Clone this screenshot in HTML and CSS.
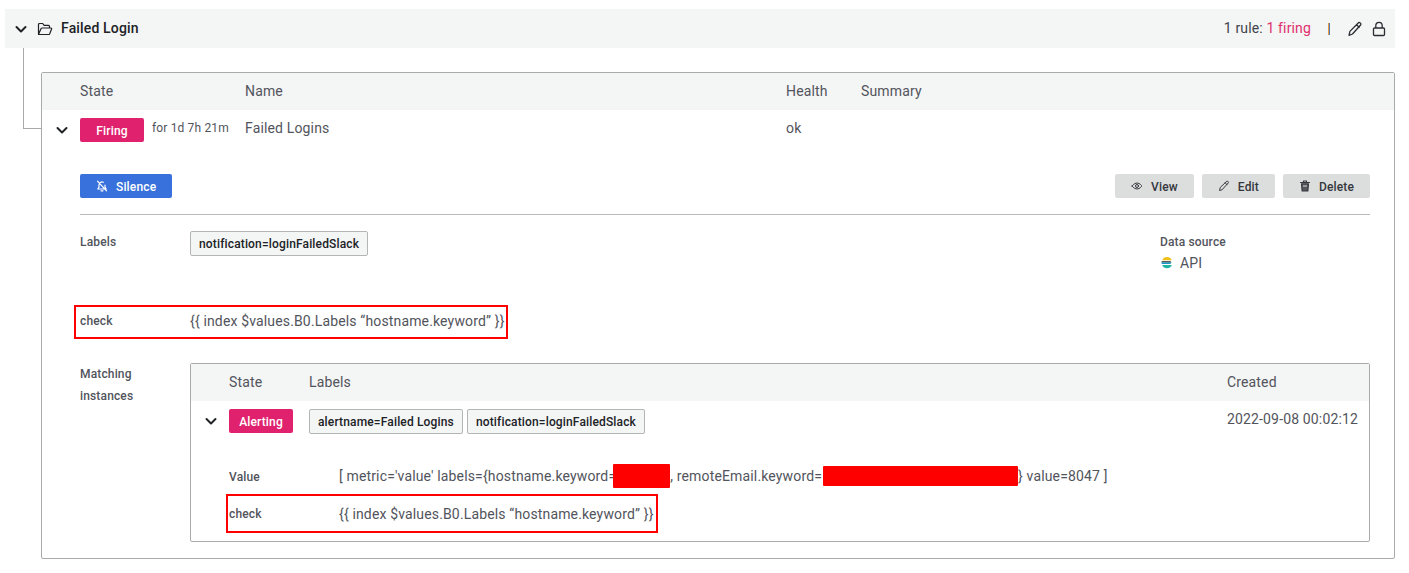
FILE: index.html
```html
<!DOCTYPE html>
<html lang="en">
<head>
<meta charset="utf-8">
<title>Failed Login</title>
<link rel="stylesheet" href="styles.css">
</head>
<body>
<section class="group">
  <header class="group-head">
    <svg class="chev" viewBox="0 0 16 16"><path d="M3.500 6l4.500 4.500L12.500 6" /></svg>
    <svg class="folder" viewBox="0 0 16 16"><path d="M1.500 13V3.500a1 1 0 0 1 1-1h3.200l1.400 1.800h4.400a1 1 0 0 1 1 1V7M1.500 13.500h10.200a1 1 0 0 0 .9-.6l2-4.900a.7.7 0 0 0-.7-1H5a1 1 0 0 0-.9.6L1.700 13" /></svg>
    <h1 class="group-title">Failed Login</h1>
    <div class="group-stats">1 rule: <span class="firing-text">1 firing</span></div>
    <span class="sep"></span>
    <svg class="act-icon pencil" viewBox="0 0 16 16"><path d="M11 2.200a1.600 1.600 0 0 1 2.800 1.500L5.500 13 2 14.300l.9-3.900zM9.600 3.800l2.600 2.600" /></svg>
    <svg class="act-icon lock" viewBox="0 0 16 16"><path d="M4.800 7V4.500a3.200 3.200 0 0 1 6.400 0V7M3.500 7h9a1 1 0 0 1 1 1v5.500a1 1 0 0 1-1 1h-9a1 1 0 0 1-1-1V8a1 1 0 0 1 1-1z" /></svg>
  </header>

  <div class="tree"></div>

  <div class="panel">
    <div class="thead">
      <span class="col-state">State</span>
      <span class="col-name">Name</span>
      <span class="col-health">Health</span>
      <span>Summary</span>
    </div>
    <div class="rule-row">
      <svg class="chev rule-chev" viewBox="0 0 16 16"><path d="M3.500 6l4.500 4.500L12.500 6" /></svg>
      <div class="col-state state-cell">
        <span class="badge">Firing</span>
        <span class="for">for 1d 7h 21m</span>
      </div>
      <span class="col-name cell-text">Failed Logins</span>
      <span class="col-health cell-text">ok</span>
    </div>

    <div class="details">
      <div class="actions">
        <button class="btn btn-blue">
          <svg class="btn-icon bell" viewBox="0 0 12 12"><path d="M3 7.200V5a3 3 0 0 1 4.300-2.700M9 5.200v2l1.200 1.800H1.800L3 7.200M5 10.800h2M1.500 1.200l9 9.600" /></svg>
          Silence
        </button>
        <div class="spacer"></div>
        <button class="btn btn-gray">
          <svg class="btn-icon" viewBox="0 0 16 16"><path d="M1.500 8s2.500-4 6.500-4 6.500 4 6.500 4-2.500 4-6.500 4-6.500-4-6.500-4z" /><circle cx="8" cy="8" r="2" /></svg>
          View
        </button>
        <button class="btn btn-gray">
          <svg class="btn-icon" viewBox="0 0 16 16"><path d="M11 2.200a1.600 1.600 0 0 1 2.800 1.500L5.500 13 2 14l.9-3.600zM9.600 3.800l2.600 2.600" /></svg>
          Edit
        </button>
        <button class="btn btn-gray">
          <svg class="btn-icon trash" viewBox="0 0 12 12"><path class="trash-body" d="M2.500 3.800h7l-.6 7.200H3.100z" /><path d="M1.500 2.500h9M4.500 2.500V1h3v1.500" /><path class="trash-line" d="M4.500 6h3" /></svg>
          Delete
        </button>
      </div>

      <div class="labels-row">
        <span class="key">Labels</span>
        <span class="tag">notification=loginFailedSlack</span>
        <div class="source">
          <span class="key">Data source</span>
          <span class="source-name">
            <svg class="es" viewBox="0 0 12 12">
              <path class="es-yellow" d="M1.200 3.200A5.200 5.200 0 0 1 10.800 3.200z" />
              <path class="es-dark" d="M.7 4.200h8.300a1.300 1.300 0 0 1 1.300 1.200H.5z" />
              <path class="es-blue" d="M.5 5.600h9.800a1.300 1.300 0 0 1-1.300 1.300H.7z" />
              <path class="es-teal" d="M1.200 8h9.600A5.200 5.200 0 0 1 1.200 8z" />
            </svg>
            API
          </span>
        </div>
      </div>

      <div class="check-row">
        <span class="key">check</span>
        <span class="plain">{{ index $values.B0.Labels “hostname.keyword” }}</span>
        <span class="mark mark-outer"></span>
      </div>

      <div class="matching">
        <span class="key key-tall">Matching<br>instances</span>
        <div class="instances">
          <div class="thead thead-inner">
            <span class="icol-state">State</span>
            <span class="icol-labels">Labels</span>
            <span class="icol-created">Created</span>
          </div>
          <div class="inst-row">
            <svg class="chev inst-chev" viewBox="0 0 16 16"><path d="M3.500 6l4.500 4.500L12.500 6" /></svg>
            <span class="icol-state"><span class="badge">Alerting</span></span>
            <div class="icol-labels inst-tags">
              <span class="tag">alertname=Failed Logins</span>
              <span class="tag">notification=loginFailedSlack</span>
            </div>
            <span class="icol-created cell-text date">2022-09-08 00:02:12</span>
          </div>
          <div class="inst-detail">
            <div class="detail-line value-line">
              <span class="key detail-key">Value</span>
              <span class="plain">[ metric='value' labels={hostname.keyword=<span class="redact redact-host"></span>, remoteEmail.keyword=<span class="redact redact-mail"></span>} value=8047 ]</span>
            </div>
            <div class="detail-line check-line">
              <span class="key detail-key">check</span>
              <span class="plain">{{ index $values.B0.Labels “hostname.keyword” }}</span>
              <span class="mark mark-inner"></span>
            </div>
          </div>
        </div>
      </div>
    </div>
  </div>
</section>
</body>
</html>
```
FILE: styles.css
```css
* { box-sizing: border-box; }
html, body { margin: 0; padding: 0; background: #fff; }
body {
  padding: 9px 14px 0 5px;
  font-family: Roboto, "Liberation Sans", sans-serif;
  font-size: 14px;
  letter-spacing: 0.15px;
  color: #52545c;
}
svg { fill: none; stroke: currentColor; stroke-linecap: round; stroke-linejoin: round; flex: none; }

.group { position: relative; }
.group-head {
  display: flex;
  align-items: center;
  height: 39px;
  background: #f4f5f5;
  padding: 0 8px 0 8px;
  color: #202226;
}
.chev { width: 16px; height: 16px; stroke-width: 2; color: #202226; }
.folder { width: 16px; height: 16px; margin-left: 8px; stroke-width: 1.200; }
.group-title { font-size: 14px; font-weight: 500; margin: 0 0 2px 8px; line-height: 20px; color: #202226; flex: 1; }
.group-stats { font-size: 14px; color: #41444b; margin-bottom: 2px; }
.firing-text { color: #e02f6b; }
.sep {
  width: 2px;
  height: 12px;
  background: linear-gradient(90deg, #eb9a3c 50%, #4f7ab8 50%);
  margin: 0 17px;
}
.act-icon { width: 16px; height: 16px; stroke-width: 1.300; color: #2b2d33; }
.pencil { margin-right: 8px; }

.tree {
  position: absolute;
  left: 18px;
  top: 39px;
  width: 19px;
  height: 81px;
  border-left: 1px solid #a9a9a9;
  border-bottom: 1px solid #a9a9a9;
}

.panel {
  margin: 24px 0 0 36px;
  height: 487px;
  border: 1px solid #a9abab;
  border-radius: 2px;
}
.thead {
  display: flex;
  align-items: center;
  height: 37px;
  background: #f4f5f5;
  padding: 0 0 2px 38px;
  line-height: 20px;
  color: #52545c;
}
.col-state { width: 165px; }
.col-name { width: 541px; }
.col-health { width: 75px; }

.rule-row { display: flex; align-items: flex-start; height: 64px; padding-top: 8px; position: relative; padding-left: 38px; }
.rule-chev { position: absolute; left: 12px; top: 12px; }
.state-cell { display: flex; align-items: flex-start; }
.cell-text { line-height: 20px; }
.badge {
  display: inline-block;
  width: 64px;
  height: 24px;
  line-height: 26px;
  text-align: center;
  background: #e0226e;
  color: #fff;
  font-size: 12px;
  font-weight: 500;
  border-radius: 2px;
}
.for { font-size: 12px; margin-left: 8px; line-height: 20px; }

.details { padding: 0 24px 0 38px; }
.actions { display: flex; gap: 8px; height: 41px; border-bottom: 1px solid #b9bbbb; }
.spacer { flex: 1; }
.btn {
  display: inline-flex;
  align-items: center;
  gap: 8px;
  height: 24px;
  padding: 2px 16px 0;
  border: 0;
  border-radius: 2px;
  font: 500 12px Roboto, "Liberation Sans", sans-serif;
  letter-spacing: 0.15px;
}
.btn-blue { background: #3871dc; color: #fff; width: 92px; }
.btn-gray { background: #dcdede; color: #35373d; }
.btn-icon { width: 12px; height: 12px; stroke-width: 1.300; margin-top: -2px; }
.bell { stroke-width: 1.200; }
.trash { stroke-width: 1.100; }
.trash-body { fill: #55575d; }
.trash-line { stroke: #dcdede; }

.labels-row { display: flex; align-items: flex-start; height: 90px; padding-top: 16px; position: relative; }
.key { font-size: 12px; font-weight: 500; color: #52545c; line-height: 22px; width: 110px; flex: none; }
.tag {
  display: inline-block;
  height: 25px;
  line-height: 25px;
  padding: 0 8px;
  background: #f4f5f5;
  border: 1px solid #b4b6b6;
  border-radius: 2px;
  font-size: 12px;
  font-weight: 500;
  color: #202226;
}
.source { margin-left: auto; width: 210px; display: flex; flex-direction: column; }
.source .key { width: auto; }
.source-name { display: flex; align-items: center; gap: 7px; line-height: 20px; margin-left: 1px; }
.es { width: 12px; height: 12px; stroke: none; }
.es-yellow { fill: #f0bf1a; }
.es-dark { fill: #22262b; }
.es-blue { fill: #1b9ac9; }
.es-teal { fill: #1fb5a2; }

.check-row { display: flex; align-items: center; height: 34px; padding-bottom: 2px; position: relative; }
.plain { line-height: 20px; }
.mark { position: absolute; border: 2px solid #f00; pointer-events: none; }
.mark-outer { left: -6px; top: 0; width: 434px; height: 34px; }

.matching { display: flex; margin-top: 24px; }
.key-tall { width: 110px; }
.instances {
  flex: 1;
  height: 179px;
  border: 1px solid #a9abab;
  border-radius: 2px;
}
.icol-state { width: 80px; flex: none; }
.icol-labels { flex: 1; }
.icol-created { width: 142px; flex: none; }
.inst-row { display: flex; align-items: flex-start; height: 56px; padding: 8px 0 0 38px; position: relative; }
.inst-chev { position: absolute; left: 12px; top: 12px; }
.inst-tags { display: flex; gap: 4px; }
.date { line-height: 20px; }

.inst-detail { padding-left: 38px; }
.detail-line { display: flex; align-items: center; position: relative; height: 38px; }
.detail-key { line-height: 20px; }
.value-line .detail-key { margin-top: 2px; }
.mark-inner { left: -3px; top: -1px; width: 432px; height: 39px; }
.redact { display: inline-block; background: #f00; vertical-align: middle; border-radius: 1px; }
.redact-host { width: 57px; height: 24px; margin: -7px 0 -5px -3px; }
.redact-mail { width: 195px; height: 20px; margin: -5px 0 -3px 1px; }
```
